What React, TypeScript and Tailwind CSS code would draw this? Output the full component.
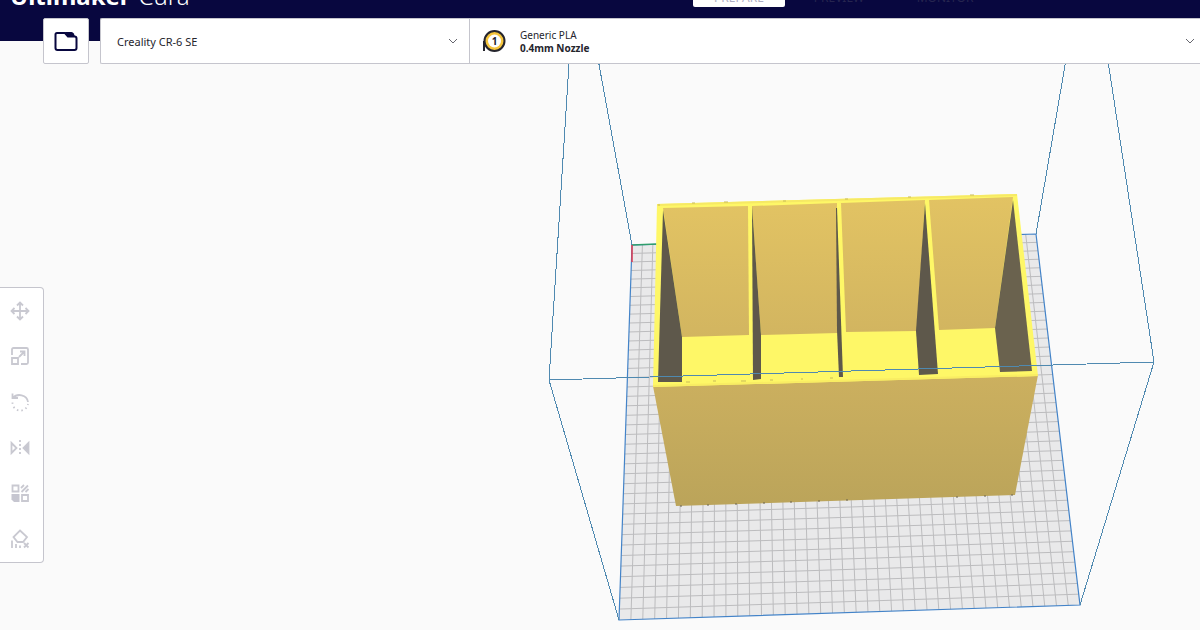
import React from "react";

type Point = [number, number];

const CELLS = 39;

// build plate corners on screen
const TL: Point = [632, 245];
const TR: Point = [1036, 234];
const BR: Point = [1080, 605];
const BL: Point = [619, 620];

// perspective mapping from the unit square to the plate
const project = (u: number, v: number): Point => {
  const dx1 = TR[0] - BR[0];
  const dx2 = BL[0] - BR[0];
  const dx3 = TL[0] - TR[0] + BR[0] - BL[0];
  const dy1 = TR[1] - BR[1];
  const dy2 = BL[1] - BR[1];
  const dy3 = TL[1] - TR[1] + BR[1] - BL[1];
  const det = dx1 * dy2 - dx2 * dy1;
  const g = (dx3 * dy2 - dx2 * dy3) / det;
  const h = (dx1 * dy3 - dx3 * dy1) / det;
  const w = g * u + h * v + 1;
  return [
    ((TR[0] - TL[0] + g * TR[0]) * u + (BL[0] - TL[0] + h * BL[0]) * v + TL[0]) / w,
    ((TR[1] - TL[1] + g * TR[1]) * u + (BL[1] - TL[1] + h * BL[1]) * v + TL[1]) / w,
  ];
};

const gridPath = Array.from({ length: CELLS - 1 }, (_, i) => {
  const t = (i + 1) / CELLS;
  const [a, b, c, d] = [project(t, 0), project(t, 1), project(0, t), project(1, t)];
  return `M${a}L${b}M${c}L${d}`;
}).join("");

const Viewport = () => (
  <svg
    className="absolute inset-0 w-full h-full"
    viewBox="0 0 1200 630"
    preserveAspectRatio="xMidYMid slice"
    role="img"
    aria-label="Build plate"
  >
    <defs>
      <linearGradient id="back" x1="0" y1="0" x2="0" y2="1">
        <stop offset="0" stopColor="#e2c363" />
        <stop offset="1" stopColor="#d2b560" />
      </linearGradient>
      <linearGradient id="front" x1="0" y1="0" x2="0" y2="1">
        <stop offset="0" stopColor="#ccb05f" />
        <stop offset="1" stopColor="#bba45a" />
      </linearGradient>
    </defs>

    {/* plate */}
    <polygon points="632,245 1036,234 1080,605 619,620" fill="#e9e9ea" />
    <path d={gridPath} stroke="#bcbcbe" fill="none" />
    <polygon
      points="632,245 1036,234 1080,605 619,620"
      fill="none"
      stroke="#4383c8"
      strokeWidth="1.2"
    />
    <path d="M632 245L657 244" stroke="#2f9e6c" strokeWidth="1.5" />
    <path d="M632 245V262" stroke="#e0384e" strokeWidth="1.5" />

    {/* model */}
    <polygon points="653,386 1038,375 1015,495 676,506" fill="url(#front)" />
    <polygon points="657,204 1017,194 1038,376 653,387" fill="#fef767" />
    <path d="M657 205L1017 195" stroke="#f6e965" strokeWidth="2" />
    <path d="M653 386L1038 375" stroke="#f9ed63" strokeWidth="2" />
    <path
      d="M658 205h2M692 203h3M724 202h4M783 201h3M845 199h3M908 197h3M970 195h4M686 382h4M713 381h3M741 381h5M770 380h3M801 379h2M830 378h3"
      stroke="#c9bb58"
    />
    <path
      d="M680 506h2M707 505h2M735 504h2M763 503h2M790 502h2M818 501h2M846 500h2M956 497h2M984 496h2M1011 495h2"
      stroke="#6a624e"
    />
    <g fill="url(#back)">
      <polygon points="663,208 748,206 749,335 682,337" />
      <polygon points="752,206 837,203 838,333 761,335" />
      <polygon points="841,203 925,200 917,331 846,332" />
      <polygon points="929,200 1013,197 995,328 939,330" />
    </g>
    <g fill="#5e584b">
      <polygon points="663,210 682,337 682,382 658,382" />
      <polygon points="752,206 761,335 761,379 753,380" />
      <polygon points="836,208 837,208 843,377 839,377 837,330" />
      <polygon points="925,203 938,374 919,375 916,331" />
    </g>
    <polygon points="1013,200 1032,371 1000,372 995,328" fill="#6a624e" />

    {/* build volume */}
    <g fill="none" stroke="#4f89b0" shapeRendering="crispEdges">
      <path d="M570 48L549 380L619 620" />
      <path d="M596 48L632 245" />
      <path d="M1068 48L1036 234" />
      <path d="M1106 48L1154 362L1080 605" />
      <path d="M549 380L1154 362" />
    </g>
  </svg>
);

const Chevron = () => (
  <svg className="w-3 h-3 pointer-events-none" viewBox="0 0 12 12" fill="none" stroke="#66666e">
    <path d="M2 4L6 8L10 4" />
  </svg>
);

const tools = [
  {
    name: "Move",
    icon: (
      <path d="M10 2V18M2 10H18M7 4.500L10 1.500L13 4.500M7 15.500L10 18.500L13 15.500M4.500 7L1.500 10L4.500 13M15.500 7L18.500 10L15.500 13" />
    ),
  },
  {
    name: "Scale",
    icon: (
      <path d="M2 9V3.500Q2 2 3.500 2H16.500Q18 2 18 3.500V16.500Q18 18 16.500 18H11M2 12H8V18H2ZM9 11L14.500 5.500M10 5.500H14.500V10" />
    ),
  },
  {
    name: "Rotate",
    icon: (
      <>
        <path d="M2.500 1.500V6H8M3 6C7 1 17 2.500 18 10" />
        <path d="M2.500 10.500A7.800 7.800 0 0 0 18 12" strokeDasharray="1.500 3" />
      </>
    ),
  },
  {
    name: "Mirror",
    icon: (
      <>
        <path d="M1.500 5L6.500 10L1.500 15Z" />
        <path d="M18.500 5L13.500 10L18.500 15Z" fill="#c6c6d0" />
        <path d="M10 2V18" strokeDasharray="2 2" />
      </>
    ),
  },
  {
    name: "Per Model Settings",
    icon: (
      <>
        <path d="M2.500 2.500H8.500V8.500H2.500ZM12 12H18V18H12Z" />
        <path d="M1.500 11H9.500V19H4L1.500 16.500Z" fill="#c6c6d0" stroke="none" />
        <path d="M11 5L14 2M11.500 9L18 2.500M15.500 9L18.500 6" />
      </>
    ),
  },
  {
    name: "Support Blocker",
    icon: (
      <path d="M10 1.500L17 8L13 13H7.500L3.500 8ZM2 11.500V19M6 15V19M10 16.500V19M14 14L18.500 18.500M18.500 14L14 18.500" />
    ),
  },
];

const App = () => {
  return (
    <div
      className="relative min-h-screen overflow-hidden bg-[#fafafa] text-[#25252d]"
      style={{ fontFamily: '"Noto Sans", sans-serif' }}
    >
      <Viewport />

      <header className="relative flex h-[41px] bg-[#08073f] text-white">
        <h1 className="-mt-4 ml-[10px] flex w-[683px] gap-2 text-2xl leading-6 whitespace-nowrap">
          <span className="font-bold">Ultimaker</span>
          <span className="font-light">Cura</span>
        </h1>
        <nav className="-mt-[10px] flex h-[17px] gap-2 text-xs leading-4">
          <button className="flex w-[92px] justify-center rounded-b-xs bg-white text-[#aeaec4]">
            PREPARE
          </button>
          <button className="flex w-[92px] justify-center text-[#26254f]">PREVIEW</button>
          <button className="flex w-[104px] justify-center text-[#26254f]">MONITOR</button>
        </nav>
      </header>

      <div className="relative -mt-[23px] ml-[43px] flex h-[46px] gap-[11px]">
        <button
          aria-label="Open file"
          className="flex w-[46px] items-center justify-center rounded-xs border border-[#c5c5cd] bg-white"
        >
          <svg className="w-6 h-6" viewBox="0 0 24 24" fill="none" stroke="#08073f" strokeWidth="2">
            <path d="M1.500 5.500V19Q1.500 21 3.500 21H20.500Q22.500 21 22.500 19V9.500Q22.500 7.500 20.500 7.500H14L11 4H3Q1.500 4 1.500 5.500Z" />
            <path d="M11 3H17.500Q19 3 19.800 4.500L21 7.500H14Z" fill="#08073f" stroke="none" />
          </svg>
        </button>

        <div className="flex grow rounded-l-xs border border-r-0 border-[#c5c5cd] bg-white">
          <div className="relative flex w-[369px] items-center border-r border-[#c5c5cd]">
            <select
              aria-label="Printer"
              className="h-full w-full appearance-none bg-transparent pt-[2px] pl-4 text-[11px] outline-none"
            >
              <option>Creality CR-6 SE</option>
            </select>
            <div className="pointer-events-none absolute right-[10px]">
              <Chevron />
            </div>
          </div>
          <button className="flex grow items-center pl-3 pr-1 text-left">
            <svg className="w-6 h-6" viewBox="0 0 24 24">
              <path d="M2 12V22" stroke="#25252d" strokeWidth="2" />
              <circle cx="12.500" cy="12" r="10" fill="#f5c53d" stroke="#25252d" strokeWidth="2" />
              <circle cx="12.500" cy="12" r="6.500" fill="#fff" />
              <text x="12.500" y="15.500" textAnchor="middle" fontSize="10" fontWeight="700" fill="#25252d">
                1
              </text>
            </svg>
            <span className="ml-[14px] grow pt-[2px] text-[10px] leading-[13px]">
              <span className="block">Generic PLA</span>
              <span className="block font-bold">0.4mm Nozzle</span>
            </span>
            <Chevron />
          </button>
        </div>
      </div>

      <div className="relative mt-[223px] grid h-[276px] w-11 grid-rows-6 rounded-r-sm border border-l-0 border-[#c5c5cd] bg-white">
        {tools.map((tool) => (
          <button key={tool.name} aria-label={tool.name} className="flex items-center pl-[10px]">
            <svg
              className="w-5 h-5"
              viewBox="0 0 20 20"
              fill="none"
              stroke="#c9c9d1"
              strokeWidth="1.8"
            >
              {tool.icon}
            </svg>
          </button>
        ))}
      </div>
    </div>
  );
};

export default App;
